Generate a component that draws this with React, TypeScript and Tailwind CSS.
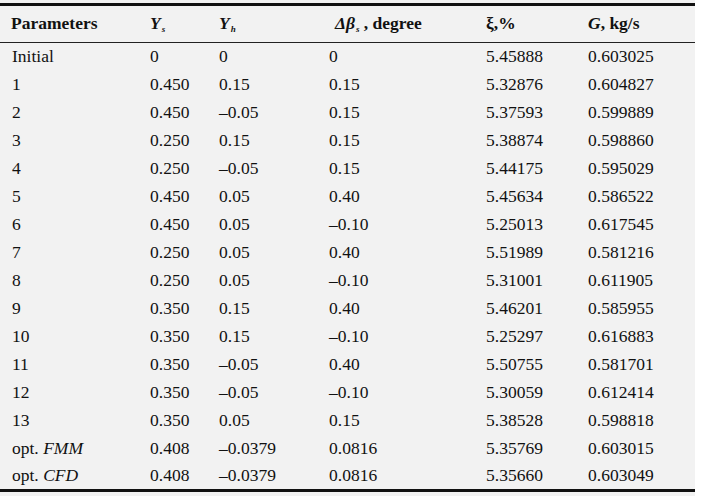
import React from "react";

type Row = [React.ReactNode, string, string, string, string, string];

const rows: Row[] = [
  ["Initial", "0", "0", "0", "5.45888", "0.603025"],
  ["1", "0.450", "0.15", "0.15", "5.32876", "0.604827"],
  ["2", "0.450", "–0.05", "0.15", "5.37593", "0.599889"],
  ["3", "0.250", "0.15", "0.15", "5.38874", "0.598860"],
  ["4", "0.250", "–0.05", "0.15", "5.44175", "0.595029"],
  ["5", "0.450", "0.05", "0.40", "5.45634", "0.586522"],
  ["6", "0.450", "0.05", "–0.10", "5.25013", "0.617545"],
  ["7", "0.250", "0.05", "0.40", "5.51989", "0.581216"],
  ["8", "0.250", "0.05", "–0.10", "5.31001", "0.611905"],
  ["9", "0.350", "0.15", "0.40", "5.46201", "0.585955"],
  ["10", "0.350", "0.15", "–0.10", "5.25297", "0.616883"],
  ["11", "0.350", "–0.05", "0.40", "5.50755", "0.581701"],
  ["12", "0.350", "–0.05", "–0.10", "5.30059", "0.612414"],
  ["13", "0.350", "0.05", "0.15", "5.38528", "0.598818"],
  [<>opt. <i>FMM</i></>, "0.408", "–0.0379", "0.0816", "5.35769", "0.603015"],
  [<>opt. <i>CFD</i></>, "0.408", "–0.0379", "0.0816", "5.35660", "0.603049"],
];

const Sub = ({ children }: { children: React.ReactNode }) => (
  <sub className="text-[9px] italic font-bold relative top-[3px] ml-[1px]">{children}</sub>
);

export default function App() {
  return (
    <div className="w-[695px] h-[496px] bg-[#f2f2f2] pt-[3px] text-[#111] text-[17.5px] leading-none font-['Liberation_Serif','Times_New_Roman',serif]">
      <table className="w-full table-fixed border-collapse border-t-[3px] border-b-[3px] border-[#111]">
        <colgroup>
          <col className="w-[150px]" />
          <col className="w-[69px]" />
          <col className="w-[110px]" />
          <col className="w-[157px]" />
          <col className="w-[102px]" />
          <col />
        </colgroup>
        <thead>
          <tr className="h-[38px] border-b-[1.5px] border-[#222] font-bold text-left">
            <th className="pl-[11px] font-bold">Parameters</th>
            <th className="font-bold">
              <i>Y</i>
              <Sub>s</Sub>
            </th>
            <th className="font-bold">
              <i>Y</i>
              <Sub>h</Sub>
            </th>
            <th className="font-bold pl-[6px]">
              <i>Δβ</i>
              <Sub>s</Sub> , degree
            </th>
            <th className="font-bold">ξ,%</th>
            <th className="font-bold">
              <i>G</i>, kg/s
            </th>
          </tr>
        </thead>
        <tbody>
          {rows.map((r, i) => (
            <tr key={i} className="h-[28px]">
              <td className="pl-[12px]">{r[0]}</td>
              <td>{r[1]}</td>
              <td>{r[2]}</td>
              <td>{r[3]}</td>
              <td>{r[4]}</td>
              <td>{r[5]}</td>
            </tr>
          ))}
        </tbody>
      </table>
    </div>
  );
}
